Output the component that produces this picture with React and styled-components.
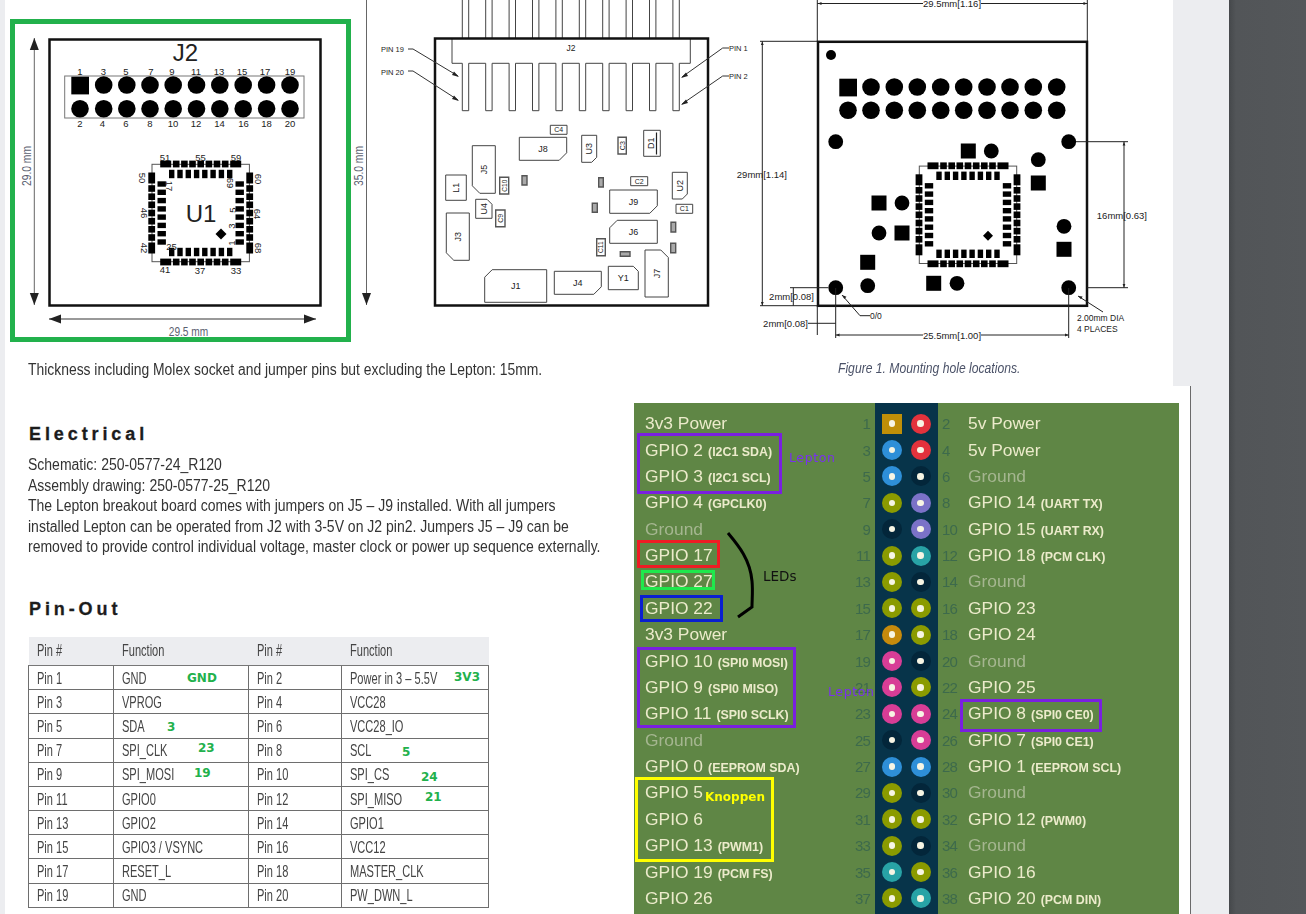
import React from 'react'
import styled, { createGlobalStyle } from 'styled-components'

const ARIAL = '"Liberation Sans", Arial, sans-serif'

const GlobalStyle = createGlobalStyle`
  html, body { margin: 0; padding: 0; background: #ecedf0; }
`

const Viewer = styled.div`
  display: grid;
  grid-template-columns: 1229px 77px;
  width: 1306px;
  height: 914px;
  overflow: hidden;
`

const Sheet = styled.div`
  background: #ecedf0;
  padding-left: 5px;
  overflow: hidden;
`

const Gutter = styled.div`
  background: linear-gradient(90deg, #45484b 0, #525558 7px, #54575a 100%);
`

const TopPage = styled.section`
  display: flex;
  width: 1168px;
  height: 386px;
  background: #fff;
`

const LeftFigures = styled.div`
  width: 735px;
`

const FigureRow = styled.div`
  display: flex;
  height: 350px;
`

const GreenFrame = styled.div`
  width: 341px;
  height: 323px;
  box-sizing: border-box;
  margin: 19px 0 0 5px;
  border: 5px solid #22b14c;
`

const Drawing = styled.svg`
  display: block;
  flex: none;
  overflow: visible;
  text {
    font-family: ${ARIAL};
    fill: #222;
  }
  .dim {
    fill: #5a6070;
    font-size: 13px;
  }
`

// the PDF font is condensed and no narrow family is installed, so squeeze the sans
const BodyText = styled.p`
  margin: 0;
  font-family: ${ARIAL};
  font-size: 16px;
  line-height: 20.6px;
  color: #333;
  white-space: nowrap;
  transform: scaleX(${(p) => p.$squeeze || 0.875});
  transform-origin: left center;
`

const Thickness = styled(BodyText)`
  margin: 10px 0 0 23px;
`

const RightFigure = styled.figure`
  margin: 0;
  width: 433px;
`

const Caption = styled.figcaption`
  padding: 9px 0 0 98px;
  font-family: ${ARIAL};
  font-style: italic;
  font-size: 15px;
  line-height: 18px;
  color: #4b5268;
  white-space: nowrap;
  transform: scaleX(0.81);
  transform-origin: 98px center;
`

const BottomPage = styled.section`
  display: flex;
  width: 1185px;
  height: 528px;
  background: #fff;
  border-right: 1px solid #6a6a6a;
`

const LeftColumn = styled.div`
  width: 629px;
  flex: none;
  box-sizing: border-box;
  padding: 37px 0 0 24px;
`

const Heading = styled.h2`
  margin: 0;
  font-family: ${ARIAL};
  font-size: 18px;
  line-height: 22px;
  font-weight: 700;
  letter-spacing: 3.9px;
  color: #1c1c1c;
  -webkit-text-stroke: 0.3px #1c1c1c;
`

const Electrical = styled(BodyText)`
  margin: 10px 0 0 -1px;
`

const PinOutHeading = styled(Heading)`
  margin-top: 40px;
`

const TableWrap = styled.div`
  position: relative;
  width: 460px;
  margin: 17px 0 0 -1px;
`

const PinTable = styled.table`
  width: 460px;
  table-layout: fixed;
  border-collapse: collapse;
  font-family: ${ARIAL};
  font-size: 16.5px;
  color: #444;
  th {
    height: 28px;
    padding: 0 0 0 8px;
    background: #ecedf0;
    font-weight: 400;
    text-align: left;
    border-bottom: 1px solid #777;
  }
  td {
    height: 22.2px;
    padding: 1px 0 0 8px;
    border: 1px solid #6e6e6e;
  }
`

const CellText = styled.span`
  display: inline-block;
  white-space: nowrap;
  transform: scaleX(0.67);
  transform-origin: left center;
`

const GreenNote = styled.span`
  position: absolute;
  left: ${(p) => p.$x}px;
  top: ${(p) => p.$y}px;
  font-family: "DejaVu Sans", sans-serif;
  font-weight: 700;
  font-size: 12px;
  line-height: 14px;
  color: #22b14c;
`

const GpioPanel = styled.div`
  position: relative;
  flex: none;
  width: 545px;
  height: 511px;
  margin-top: 17px;
  padding-top: 7.5px;
  box-sizing: border-box;
  overflow: hidden;
  filter: blur(0.35px);
  background: linear-gradient(
    90deg,
    #5f8645 241px,
    #07344a 241px,
    #07344a 304px,
    #5f8645 304px
  );
`

const GpioRow = styled.div`
  display: grid;
  grid-template-columns: 241px 63px 1fr;
  height: 26.39px;
  align-items: center;
`

const LeftSide = styled.div`
  display: flex;
  justify-content: space-between;
  align-items: center;
  padding: 0 5px 0 11px;
`

const RightSide = styled.div`
  display: flex;
  align-items: center;
`

const PinLabel = styled.span`
  font-family: ${ARIAL};
  font-size: 17.4px;
  white-space: nowrap;
  color: ${(p) => (p.$dim ? '#a5b690' : '#ecebcb')};
  small {
    font-size: 12.4px;
    font-weight: 700;
    margin-left: 5px;
  }
`

const PinNumber = styled.span`
  font-family: ${ARIAL};
  font-size: 15px;
  letter-spacing: -0.8px;
  color: #3d6a4c;
`

const RightNumber = styled(PinNumber)`
  width: 26px;
  padding-left: 4px;
`

const PinPair = styled.div`
  display: flex;
  gap: 8.7px;
  padding-left: 7px;
`

const Pin = styled.span`
  display: flex;
  align-items: center;
  justify-content: center;
  width: 20px;
  height: 20px;
  border-radius: ${(p) => (p.$square ? '0' : '50%')};
  background: ${(p) => p.$color};
  &::after {
    content: '';
    width: 6.5px;
    height: 6.5px;
    border-radius: 50%;
    background: #f7f5e4;
  }
`

const MarkBox = styled.div`
  position: absolute;
  left: ${(p) => p.$x}px;
  top: ${(p) => p.$y}px;
  width: ${(p) => p.$w}px;
  height: ${(p) => p.$h}px;
  box-sizing: border-box;
  border: 3px solid ${(p) => p.$color};
`

const MarkText = styled.span`
  position: absolute;
  left: ${(p) => p.$x}px;
  top: ${(p) => p.$y}px;
  font-family: "DejaVu Sans", sans-serif;
  font-size: ${(p) => p.$size || 12.5}px;
  line-height: 16px;
  font-weight: ${(p) => (p.$bold ? 700 : 400)};
  letter-spacing: ${(p) => p.$spacing || 0}px;
  color: ${(p) => p.$color};
`

const Brace = styled.svg`
  position: absolute;
  left: 90px;
  top: 128px;
`

const C = {
  gold: '#c08f08',
  red: '#e3323c',
  blue: '#2e8fd8',
  dark: '#03263a',
  olive: '#8b9b00',
  purple: '#7b72c8',
  teal: '#28a3a6',
  orange: '#c68a0c',
  pink: '#d83d96'
}

const gpioLeft = [
  ['1', '3v3 Power', '', C.gold],
  ['3', 'GPIO 2', '(I2C1 SDA)', C.blue],
  ['5', 'GPIO 3', '(I2C1 SCL)', C.blue],
  ['7', 'GPIO 4', '(GPCLK0)', C.olive],
  ['9', 'Ground', '', C.dark],
  ['11', 'GPIO 17', '', C.olive],
  ['13', 'GPIO 27', '', C.olive],
  ['15', 'GPIO 22', '', C.olive],
  ['17', '3v3 Power', '', C.orange],
  ['19', 'GPIO 10', '(SPI0 MOSI)', C.pink],
  ['21', 'GPIO 9', '(SPI0 MISO)', C.pink],
  ['23', 'GPIO 11', '(SPI0 SCLK)', C.pink],
  ['25', 'Ground', '', C.dark],
  ['27', 'GPIO 0', '(EEPROM SDA)', C.blue],
  ['29', 'GPIO 5', '', C.olive],
  ['31', 'GPIO 6', '', C.olive],
  ['33', 'GPIO 13', '(PWM1)', C.olive],
  ['35', 'GPIO 19', '(PCM FS)', C.teal],
  ['37', 'GPIO 26', '', C.olive]
]

const gpioRight = [
  ['2', '5v Power', '', C.red],
  ['4', '5v Power', '', C.red],
  ['6', 'Ground', '', C.dark],
  ['8', 'GPIO 14', '(UART TX)', C.purple],
  ['10', 'GPIO 15', '(UART RX)', C.purple],
  ['12', 'GPIO 18', '(PCM CLK)', C.teal],
  ['14', 'Ground', '', C.dark],
  ['16', 'GPIO 23', '', C.olive],
  ['18', 'GPIO 24', '', C.olive],
  ['20', 'Ground', '', C.dark],
  ['22', 'GPIO 25', '', C.olive],
  ['24', 'GPIO 8', '(SPI0 CE0)', C.pink],
  ['26', 'GPIO 7', '(SPI0 CE1)', C.pink],
  ['28', 'GPIO 1', '(EEPROM SCL)', C.blue],
  ['30', 'Ground', '', C.dark],
  ['32', 'GPIO 12', '(PWM0)', C.olive],
  ['34', 'Ground', '', C.dark],
  ['36', 'GPIO 16', '', C.olive],
  ['38', 'GPIO 20', '(PCM DIN)', C.teal]
]

const pinRows = [
  ['Pin 1', 'GND', 'Pin 2', 'Power in 3 – 5.5V'],
  ['Pin 3', 'VPROG', 'Pin 4', 'VCC28'],
  ['Pin 5', 'SDA', 'Pin 6', 'VCC28_IO'],
  ['Pin 7', 'SPI_CLK', 'Pin 8', 'SCL'],
  ['Pin 9', 'SPI_MOSI', 'Pin 10', 'SPI_CS'],
  ['Pin 11', 'GPIO0', 'Pin 12', 'SPI_MISO'],
  ['Pin 13', 'GPIO2', 'Pin 14', 'GPIO1'],
  ['Pin 15', 'GPIO3 / VSYNC', 'Pin 16', 'VCC12'],
  ['Pin 17', 'RESET_L', 'Pin 18', 'MASTER_CLK'],
  ['Pin 19', 'GND', 'Pin 20', 'PW_DWN_L']
]

const greenNotes = [
  ['GND', 159, 34],
  ['3V3', 426, 33],
  ['3', 139, 83],
  ['23', 170, 104],
  ['5', 374, 108],
  ['19', 166, 129],
  ['24', 393, 133],
  ['21', 397, 153]
]

const Chip = ({ cx, cy }) => {
  const sides = [0, 90, 180, 270]
  const small = [-24.5, -16.3, -8.2, 0, 8.2, 16.3, 24.5]
  const inner = [-29, -20.7, -12.4, -4.1, 4.1, 12.4, 20.7, 29]
  return (
    <g>
      <rect x={cx - 48.7} y={cy - 48.7} width={97.4} height={97.4} fill="none" stroke="#555" />
      {sides.map((deg) => (
        <g key={deg} transform={`rotate(${deg} ${cx} ${cy})`} fill="#000">
          <rect x={cx - 40.5} y={cy - 52.4} width={11} height={6.8} />
          <rect x={cx + 29.5} y={cy - 52.4} width={11} height={6.8} />
          {small.map((o) => (
            <rect key={o} x={cx + o - 3.3} y={cy - 52.4} width={6.6} height={6.8} />
          ))}
          {inner.map((o) => (
            <rect key={o} x={cx + o - 2.7} y={cy - 43.2} width={5.4} height={8.4} />
          ))}
        </g>
      ))}
    </g>
  )
}

const Diamond = ({ cx, cy, r }) => (
  <polygon points={`${cx},${cy - r} ${cx + r},${cy} ${cx},${cy + r} ${cx - r},${cy}`} fill="#000" />
)

const Label = ({ x, y, size = 9.5, rot, width, children, className }) => (
  <text
    x={x}
    y={y}
    fontSize={size}
    textAnchor="middle"
    className={className}
    textLength={width}
    lengthAdjust={width ? 'spacingAndGlyphs' : undefined}
    transform={rot ? `rotate(${rot} ${x} ${y})` : undefined}
  >
    {children}
  </text>
)

const ArrowV = ({ x, y1, y2, top }) => (
  <g>
    <line x1={x} y1={y1} x2={x} y2={y2} stroke="#666" />
    {top && <polygon points={`${x},${y1} ${x + 4.5},${y1 + 12} ${x - 4.5},${y1 + 12}`} fill="#222" />}
    <polygon points={`${x},${y2} ${x + 4.5},${y2 - 12} ${x - 4.5},${y2 - 12}`} fill="#222" />
  </g>
)

const Figure1 = () => {
  const topNums = [
    [1, 80], [3, 103.3], [5, 126], [7, 151], [9, 172],
    [11, 196], [13, 219], [15, 242], [17, 265], [19, 290]
  ]
  const botNums = [
    [2, 80], [4, 102.5], [6, 126], [8, 150], [10, 173],
    [12, 196], [14, 219.6], [16, 243.6], [18, 266.6], [20, 290]
  ]
  const cols = [103.7, 126.8, 150, 173.2, 196.5, 219.8, 243.2, 266.6, 290]
  return (
    <GreenFrame>
      <Drawing width="331" height="313" viewBox="15 24 331 313">
        <rect x="49.5" y="39.5" width="271" height="266" fill="none" stroke="#111" strokeWidth="2.5" />
        <Label x={185.5} y={61} size={24}>J2</Label>
        <rect x="64.7" y="76" width="239.3" height="42" fill="none" stroke="#777" />
        <rect x="71.3" y="76.7" width="17.7" height="17.7" fill="#000" />
        <circle cx="80" cy="108.7" r="8.8" fill="#000" />
        {cols.map((x) => (
          <g key={x}>
            <circle cx={x} cy="85" r="8.8" fill="#000" />
            <circle cx={x} cy="108.7" r="8.8" fill="#000" />
          </g>
        ))}
        {topNums.map(([n, x]) => <Label key={n} x={x} y={75}>{n}</Label>)}
        {botNums.map(([n, x]) => <Label key={n} x={x} y={127}>{n}</Label>)}
        <Chip cx={200.7} cy={213} />
        <Diamond cx={221} cy={234} r={5.5} />
        <Label x={201} y={222} size={24}>U1</Label>
        <Label x={165} y={161}>51</Label>
        <Label x={200.5} y={161}>55</Label>
        <Label x={236} y={161}>59</Label>
        <Label x={165} y={273}>41</Label>
        <Label x={200} y={274}>37</Label>
        <Label x={236} y={274}>33</Label>
        <Label x={171.5} y={250}>25</Label>
        <Label x={139} y={178} rot={90}>50</Label>
        <Label x={141} y={213} rot={90}>46</Label>
        <Label x={141} y={248} rot={90}>42</Label>
        <Label x={254.5} y={179} rot={90}>60</Label>
        <Label x={253.5} y={214} rot={90}>64</Label>
        <Label x={254.5} y={248} rot={90}>68</Label>
        <Label x={166} y={186} rot={90}>17</Label>
        <Label x={227} y={183} rot={90}>69</Label>
        <Label x={236} y={210} rot={-90}>5</Label>
        <Label x={235} y={226} rot={-90}>3</Label>
        <Label x={235} y={243} rot={-90}>1</Label>
        <ArrowV x={34.3} y1={38} y2={305} top />
        <polyline points="49,319 316,319" stroke="#777" strokeWidth="1.5" fill="none" />
        <polygon points="49,319 61,314.5 61,323.5" fill="#222" />
        <polygon points="316,319 304,314.5 304,323.5" fill="#222" />
        <Label x={31} y={166} rot={-90} width={40} className="dim">29.0 mm</Label>
        <Label x={188.5} y={336} width={39.5} className="dim">29.5 mm</Label>
      </Drawing>
    </GreenFrame>
  )
}

const parts = [
  { x: 550.3, y: 125.3, w: 16.7, h: 9, t: 'C4', s: 7 },
  { x: 519.3, y: 137.3, w: 47.4, h: 23, cut: 'br', t: 'J8' },
  { x: 581.7, y: 135.3, w: 15, h: 27, cut: 'br', c5: true, t: 'U3', rot: -90 },
  { x: 618, y: 137.3, w: 8.3, h: 16.7, t: 'C3', s: 7, rot: -90, grey: true },
  { x: 643.7, y: 130.3, w: 16.6, h: 26, t: 'D1', rot: -90, tx: 651 },
  { x: 472.3, y: 145.7, w: 23, h: 47.6, cut: 'bl', t: 'J5', rot: -90 },
  { x: 445.7, y: 175, w: 20.6, h: 25.3, t: 'L1', rot: -90 },
  { x: 499.7, y: 177.3, w: 9, h: 16.7, t: 'C10', s: 6.5, rot: -90, grey: true },
  { x: 475.7, y: 199.3, w: 16.3, h: 19, cut: 'tr', c5: true, t: 'U4', rot: -90 },
  { x: 495.7, y: 210, w: 9.3, h: 16.7, t: 'C9', s: 7, rot: -90, grey: true },
  { x: 446.3, y: 213, w: 23, h: 47.3, cut: 'bl', t: 'J3', rot: -90 },
  { x: 484.7, y: 269.7, w: 62, h: 32.6, cut: 'tl', t: 'J1' },
  { x: 554.3, y: 271.3, w: 47, h: 23, cut: 'br', t: 'J4' },
  { x: 608.3, y: 266.3, w: 30, h: 23.4, cut: 'tr', c5: true, t: 'Y1' },
  { x: 645, y: 250, w: 23.3, h: 47, cut: 'tr', t: 'J7', rot: -90 },
  { x: 672.3, y: 172.3, w: 15, h: 26.7, cut: 'br', c5: true, t: 'U2', rot: -90 },
  { x: 630.7, y: 176.7, w: 17, h: 9, t: 'C2', s: 7 },
  { x: 609.7, y: 190, w: 47.6, h: 23.3, cut: 'br', t: 'J9' },
  { x: 676, y: 204.3, w: 16.7, h: 9, t: 'C1', s: 7 },
  { x: 609.7, y: 220.3, w: 47.6, h: 23, cut: 'tl', t: 'J6' },
  { x: 596.7, y: 238.7, w: 8.6, h: 17, t: 'C11', s: 6.5, rot: -90, grey: true },
  { x: 522, y: 175.7, w: 5, h: 9.3, grey: true },
  { x: 598.7, y: 177.7, w: 4.6, h: 9.3, grey: true },
  { x: 592.3, y: 203.3, w: 5, h: 9, grey: true },
  { x: 671, y: 222.3, w: 4.7, h: 9.7, grey: true },
  { x: 670.7, y: 243.3, w: 5, h: 9.4, grey: true },
  { x: 620.3, y: 251.7, w: 9.7, h: 4.6, grey: true }
]

const partPath = ({ x, y, w, h, cut, c5 }) => {
  const k = c5 ? 5 : 7.5
  const r = x + w
  const b = y + h
  if (cut === 'br') return `M${x} ${y}H${r}V${b - k}L${r - k} ${b}H${x}Z`
  if (cut === 'bl') return `M${x} ${y}H${r}V${b}H${x + k}L${x} ${b - k}Z`
  if (cut === 'tr') return `M${x} ${y}H${r - k}L${r} ${y + k}V${b}H${x}Z`
  if (cut === 'tl') return `M${x + k} ${y}H${r}V${b}H${x}V${y + k}Z`
  return `M${x} ${y}H${r}V${b}H${x}Z`
}

const Part = ({ part }) => {
  const cx = part.tx || part.x + part.w / 2
  const cy = part.y + part.h / 2
  const size = part.s || 9
  return (
    <g>
      <path
        d={partPath(part)}
        fill={part.t ? 'none' : '#aaa'}
        stroke={part.grey ? '#555' : '#444'}
        strokeWidth={part.grey ? 1.4 : 1}
      />
      {part.t && (
        <text
          x={cx}
          y={cy + size * 0.36}
          fontSize={size}
          textAnchor="middle"
          transform={part.rot ? `rotate(${part.rot} ${cx} ${cy})` : undefined}
        >
          {part.t}
        </text>
      )}
    </g>
  )
}

const Figure2 = () => {
  const pinsX = Array.from({ length: 10 }, (_, i) => 462.3 + i * 23.4)
  const body =
    'M452 39V63.3' +
    pinsX.map((x) => `H${x}V110.7H${x + 6.4}V63.3`).join('') +
    'H690.3V39'
  return (
    <Drawing width="389" height="350" viewBox="351 0 389 350">
      <ArrowV x={366.5} y1={-5} y2={305} />
      <Label x={363} y={166} rot={-90} width={40} className="dim">35.0 mm</Label>
      {pinsX.map((x) => (
        <path key={x} d={`M${x} 0V38M${x + 6.4} 0V38`} stroke="#444" fill="none" />
      ))}
      <path d={body} stroke="#444" fill="none" />
      <rect x="435" y="38.5" width="273" height="267" fill="none" stroke="#111" strokeWidth="2.5" />
      <Label x={571} y={51} size={8.5}>J2</Label>
      <text x="381" y="52" fontSize="7.5">PIN 19</text>
      <text x="381" y="75" fontSize="7.5">PIN 20</text>
      <text x="729" y="51" fontSize="7.5">PIN 1</text>
      <text x="729" y="79" fontSize="7.5">PIN 2</text>
      <path d="M408 49H413L458 76M408 71H413L458 100" stroke="#333" fill="none" />
      <path d="M729 48H722.7L682 77M729 76H722.7L682 104" stroke="#333" fill="none" />
      <path d="M459 77L452 75L454 71.5ZM459 101L452 99L454 95.5ZM681 78L688 76L686 72.5ZM681 105L688 103L686 99.5Z" fill="#222" />
      {parts.map((part) => <Part key={`${part.x}-${part.y}`} part={part} />)}
      <path d="M656.5 132.5V154.5" stroke="#222" strokeWidth="1.2" />
    </Drawing>
  )
}

const holes = [[835.7, 141.7], [1068.7, 141.7], [835.7, 287.7], [1068.7, 287.7]]
const padCircles = [
  [991.3, 151], [1038.3, 159.7], [902, 203], [879, 233], [867.7, 285.7], [957, 283.3], [1064, 226.3]
]
const padSquares = [
  [968.3, 151], [1038.3, 183], [879, 203], [902, 233], [867.7, 262.3], [933.7, 283.3], [1064, 249.3]
]

const Figure3 = () => {
  const cols = [871, 894.3, 917.3, 940.7, 963.7, 987, 1010, 1033.3, 1056.7]
  return (
    <Drawing width="433" height="350" viewBox="740 0 433 350">
      <rect x="818" y="41.8" width="269" height="264" fill="none" stroke="#111" strokeWidth="2.5" />
      <circle cx="831" cy="55" r="5" fill="#000" />
      <rect x="839.3" y="78.7" width="17.7" height="17.7" fill="#000" />
      <circle cx="848" cy="110.3" r="8.8" fill="#000" />
      {cols.map((x) => (
        <g key={x}>
          <circle cx={x} cy="87" r="8.8" fill="#000" />
          <circle cx={x} cy="110.3" r="8.8" fill="#000" />
        </g>
      ))}
      {holes.concat(padCircles).map(([x, y]) => <circle key={`${x}-${y}`} cx={x} cy={y} r="7.4" fill="#000" />)}
      {padSquares.map(([x, y]) => <rect key={`${x}-${y}`} x={x - 7.5} y={y - 7.5} width="15" height="15" fill="#000" />)}
      <Chip cx={968} cy={214.8} />
      <Diamond cx={988} cy={235.7} r={5} />

      <path
        d="M817.3 0V41M1087.3 0V41M817.3 3.5H1087.3
           M762.3 41.3V305.7M760 41.3H817M760 305.7H817
           M793.3 287.7V305.7M790 287.7H828
           M817.3 306V335M835.7 288V338M1068.7 288V338
           M808 323.3H835.7M835.7 335H1068.7
           M1124 141.7V287.7M1076 141.7H1128M1087 287.7H1128
           M870 315.7H860L842 295M1103 312L1078 296"
        stroke="#222"
        fill="none"
      />
      <path
        d="M818 3.5l3.5-1.4v2.8ZM1087 3.5l-3.5-1.4v2.8Z
           M836 335l3.5-1.4v2.8ZM1068.5 335l-3.5-1.4v2.8Z
           M762.3 41.5l-1.4 3.5h2.8ZM762.3 305.5l-1.4-3.5h2.8Z
           M1124 142l-1.4 3.5h2.8ZM1124 287.5l-1.4-3.5h2.8Z
           M842 295l4.5 1.8-2.2 2.2ZM1078 296l4.6 0.6-1.6 2.6Z"
        fill="#222"
      />
      <rect x="923" y="0" width="58" height="8" fill="#fff" />
      <rect x="923" y="331" width="58" height="8" fill="#fff" />
      <text x="952" y="7" fontSize="9.5" textAnchor="middle">29.5mm[1.16]</text>
      <text x="787" y="178" fontSize="9.5" textAnchor="end">29mm[1.14]</text>
      <text x="814" y="300" fontSize="9.5" textAnchor="end">2mm[0.08]</text>
      <text x="808" y="327" fontSize="9.5" textAnchor="end">2mm[0.08]</text>
      <text x="952" y="339" fontSize="9.5" textAnchor="middle">25.5mm[1.00]</text>
      <text x="1147" y="219" fontSize="9.5" textAnchor="end">16mm[0.63]</text>
      <text x="870" y="319" fontSize="8.5">0/0</text>
      <text x="1077" y="321" fontSize="8.5">2.00mm DIA</text>
      <text x="1077" y="332" fontSize="8.5">4 PLACES</text>
    </Drawing>
  )
}

const PinText = ({ row }) => (
  <PinLabel $dim={row[1] === 'Ground'}>
    {row[1]}
    {row[2] && <small>{row[2]}</small>}
  </PinLabel>
)

const GpioDiagram = () => (
  <GpioPanel>
    {gpioLeft.map((row, i) => (
      <GpioRow key={row[0]}>
        <LeftSide>
          <PinText row={row} />
          <PinNumber>{row[0]}</PinNumber>
        </LeftSide>
        <PinPair>
          <Pin $color={row[3]} $square={i === 0} />
          <Pin $color={gpioRight[i][3]} />
        </PinPair>
        <RightSide>
          <RightNumber>{gpioRight[i][0]}</RightNumber>
          <PinText row={gpioRight[i]} />
        </RightSide>
      </GpioRow>
    ))}
    <MarkBox $x={3} $y={30} $w={145} $h={61} $color="#7a1fe0" />
    <MarkBox $x={3} $y={137} $w={83} $h={28} $color="#ee1c24" />
    <MarkBox $x={7} $y={167} $w={74} $h={20} $color="#1fe84c" />
    <MarkBox $x={6} $y={192} $w={83} $h={27} $color="#0a1fd0" />
    <MarkBox $x={3} $y={244} $w={159} $h={81} $color="#7a1fe0" />
    <MarkBox $x={1} $y={374} $w={139} $h={85} $color="#ffff00" />
    <MarkBox $x={326} $y={296} $w={142} $h={33} $color="#7a1fe0" />
    <MarkText $x={155} $y={47} $color="#7a2ff0" $spacing={0.6}>Lepton</MarkText>
    <MarkText $x={194} $y={281} $color="#7a2ff0" $spacing={0.6}>Lepton</MarkText>
    <MarkText $x={129} $y={165} $color="#111" $size={13.5}>LEDs</MarkText>
    <MarkText $x={71} $y={386} $color="#ffff00" $bold $size={12}>Knoppen</MarkText>
    <Brace width="40" height="100" viewBox="90 128 40 100">
      <path
        d="M94 130C104 142 116 156 118 178C119 188 118 196 118 204L104 214"
        fill="none"
        stroke="#000"
        strokeWidth="3"
      />
    </Brace>
  </GpioPanel>
)

const App = () => (
  <>
    <GlobalStyle />
    <Viewer>
      <Sheet>
        <TopPage>
          <LeftFigures>
            <FigureRow>
              <Figure1 />
              <Figure2 />
            </FigureRow>
            <Thickness $squeeze={0.868}>
              Thickness including Molex socket and jumper pins but excluding the Lepton: 15mm.
            </Thickness>
          </LeftFigures>
          <RightFigure>
            <Figure3 />
            <Caption>Figure 1. Mounting hole locations.</Caption>
          </RightFigure>
        </TopPage>
        <BottomPage>
          <LeftColumn>
            <Heading>Electrical</Heading>
            <Electrical>
              Schematic: 250-0577-24_R120
              <br />
              Assembly drawing: 250-0577-25_R120
              <br />
              The Lepton breakout board comes with jumpers on J5 – J9 installed. With all jumpers
              <br />
              installed Lepton can be operated from J2 with 3-5V on J2 pin2. Jumpers J5 – J9 can be
              <br />
              removed to provide control individual voltage, master clock or power up sequence externally.
            </Electrical>
            <PinOutHeading>Pin-Out</PinOutHeading>
            <TableWrap>
              <PinTable>
                <colgroup>
                  <col width="85" />
                  <col width="135" />
                  <col width="93" />
                  <col width="147" />
                </colgroup>
                <thead>
                  <tr>
                    <th><CellText>Pin #</CellText></th>
                    <th><CellText>Function</CellText></th>
                    <th><CellText>Pin #</CellText></th>
                    <th><CellText>Function</CellText></th>
                  </tr>
                </thead>
                <tbody>
                  {pinRows.map((row) => (
                    <tr key={row[0]}>
                      {row.map((cell) => <td key={cell}><CellText>{cell}</CellText></td>)}
                    </tr>
                  ))}
                </tbody>
              </PinTable>
              {greenNotes.map(([text, x, y]) => (
                <GreenNote key={text} $x={x} $y={y}>{text}</GreenNote>
              ))}
            </TableWrap>
          </LeftColumn>
          <GpioDiagram />
        </BottomPage>
      </Sheet>
      <Gutter />
    </Viewer>
  </>
)

export default App
